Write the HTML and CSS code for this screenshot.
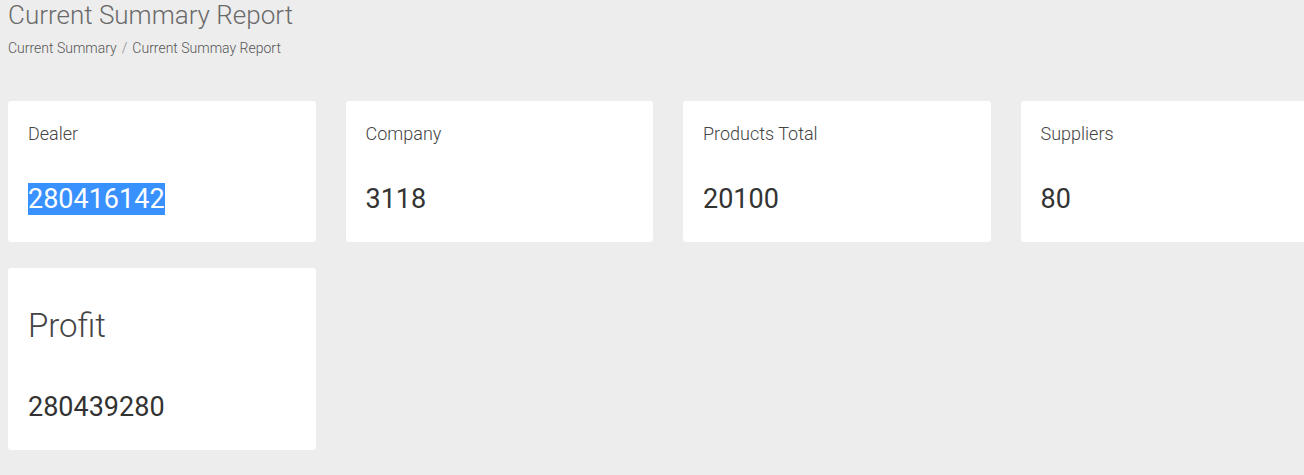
FILE: index.html
```html
<!DOCTYPE html>
<html>
<head>
<meta charset="utf-8">
<link rel="stylesheet" href="styles.css">
</head>
<body>
<div class="page">
  <header class="page-header">
    <h1 class="page-title">Current Summary Report</h1>
    <nav class="breadcrumb">
      <span class="crumb">Current Summary</span>
      <span class="crumb-sep">/</span>
      <span class="crumb">Current Summay Report</span>
    </nav>
  </header>
  <section class="stats">
    <div class="card">
      <div class="card-label">Dealer</div>
      <div class="card-value"><span class="selected">280416142</span></div>
    </div>
    <div class="card">
      <div class="card-label">Company</div>
      <div class="card-value">3118</div>
    </div>
    <div class="card">
      <div class="card-label">Products Total</div>
      <div class="card-value">20100</div>
    </div>
    <div class="card">
      <div class="card-label">Suppliers</div>
      <div class="card-value">80</div>
    </div>
    <div class="card card-big">
      <div class="card-label">Profit</div>
      <div class="card-value">280439280</div>
    </div>
  </section>
</div>
</body>
</html>
```

FILE: styles.css
```css
html, body {
  margin: 0;
  padding: 0;
  background: #ededed;
  overflow: hidden;
  font-family: Roboto, "Liberation Sans", sans-serif;
}

.page {
  padding: 0 0 0 8px;
}

.page-title {
  margin: 0;
  font-size: 26px;
  font-weight: 300;
  line-height: 30px;
  color: #6a6a6a;
}

.breadcrumb {
  display: flex;
  gap: 5px;
  margin-top: 9px;
  font-size: 14px;
  line-height: 18px;
  font-weight: 300;
  color: #555;
}

.crumb-sep {
  color: #888;
}

.stats {
  display: grid;
  grid-template-columns: repeat(4, 307.5px);
  column-gap: 30px;
  row-gap: 26px;
  margin-top: 44px;
  align-items: start;
}

.card {
  background: #fff;
  border-radius: 3px;
  padding: 22px 20px 27px;
}

.card-label {
  font-size: 18px;
  font-weight: 300;
  line-height: 21px;
  color: #444;
  margin-bottom: 39px;
}

.card-value {
  font-size: 27px;
  font-weight: 400;
  line-height: 32px;
  color: #333;
}

.selected {
  background: #3990ff;
  color: #fff;
}

.card-big .card-label {
  font-size: 33px;
  line-height: 38px;
  margin-top: 17px;
  margin-bottom: 46px;
}

.card-big {
  padding-bottom: 27px;
}
```
